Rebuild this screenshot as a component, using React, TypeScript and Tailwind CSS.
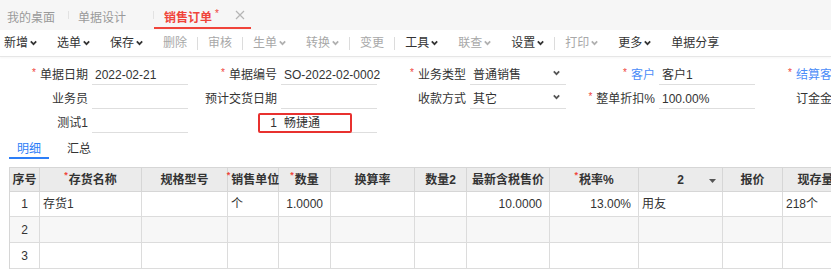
import React from "react";

const font = "font-['Liberation_Sans','Noto_Sans_CJK_SC',sans-serif]";

function Chevron({ className = "" }: { className?: string }) {
  return (
    <svg width="7" height="6" viewBox="0 0 7 6" className={className}>
      <path d="M0.8 1.4 L3.5 4.2 L6.2 1.4" fill="none" stroke="currentColor" strokeWidth="1.7" />
    </svg>
  );
}

type Tool = { t: string; c?: boolean; d?: boolean } | "|";

const tools: Tool[] = [
  { t: "新增", c: true },
  { t: "选单", c: true },
  { t: "保存", c: true },
  { t: "删除", d: true },
  "|",
  { t: "审核", d: true },
  "|",
  { t: "生单", c: true, d: true },
  { t: "转换", c: true, d: true },
  "|",
  { t: "变更", d: true },
  "|",
  { t: "工具", c: true },
  { t: "联查", c: true, d: true },
  { t: "设置", c: true },
  "|",
  { t: "打印", c: true, d: true },
  { t: "更多", c: true },
  { t: "单据分享" },
];

function Star() {
  return <span className="text-[#f0443a] text-[10px] leading-none mr-[4px] relative top-[-3px]">*</span>;
}

function Field({
  label,
  req,
  blue,
  value,
  select,
  noInput,
}: {
  label?: string;
  req?: boolean;
  blue?: boolean;
  value?: string;
  select?: boolean;
  noInput?: boolean;
}) {
  return (
    <div className="flex w-[189px] h-[24px] shrink-0">
      <div className={`w-[88px] text-right pt-[5px] whitespace-nowrap ${blue ? "text-[#4b8df8]" : "text-[#333]"}`}>
        {req && <Star />}
        {label}
      </div>
      {!noInput && (
        <div className="ml-[4px] w-[96px] border-b border-[#dedede] flex items-start pt-[5px] pl-[3px] pr-[6px] justify-between text-[#333]">
          <span className="whitespace-nowrap">{value}</span>
          {select && <Chevron className="text-[#555] mt-[4px]" />}
        </div>
      )}
    </div>
  );
}

const cols = [
  { h: "序号", w: 30 },
  { h: "存货名称", w: 102, r: true },
  { h: "规格型号", w: 86 },
  { h: "销售单位", w: 51, r: true },
  { h: "数量", w: 52, r: true },
  { h: "换算率", w: 84 },
  { h: "数量2", w: 52 },
  { h: "最新含税售价", w: 83 },
  { h: "税率%", w: 89, r: true },
  { h: "2", w: 84, dd: true },
  { h: "报价", w: 60 },
  { h: "现存量", w: 66 },
];

const row1: { v: string; a: "l" | "r" | "c" }[] = [
  { v: "1", a: "c" },
  { v: "存货1", a: "l" },
  { v: "", a: "l" },
  { v: "个", a: "l" },
  { v: "1.0000", a: "r" },
  { v: "", a: "l" },
  { v: "", a: "l" },
  { v: "10.0000", a: "r" },
  { v: "13.00%", a: "r" },
  { v: "用友", a: "l" },
  { v: "", a: "l" },
  { v: "218个", a: "l" },
];

export default function App() {
  return (
    <div className={`w-[831px] h-[270px] overflow-hidden bg-white text-[12px] ${font}`}>
      {/* tabs */}
      <div className="h-[30px] bg-[#f6f6f6] flex items-stretch text-[#9a9a9a]">
        <div className="pl-[7px] pr-[13px] pt-[9px]">我的桌面</div>
        <div className="w-px bg-[#e2e2e2] my-[11px]" />
        <div className="pl-[9px] pr-[27px] pt-[9px]">单据设计</div>
        <div className="w-px bg-[#e2e2e2] my-[11px]" />
        <div className="w-[97px] flex items-start pl-[10px] pt-[9px] border-b-2 border-[#f0443a] mb-[1px]">
          <span className="text-[#f0443a] font-bold">销售订单</span>
          <span className="text-[#f0443a] text-[10px] ml-[3px] leading-none">*</span>
          <span className="ml-auto mr-[6px] mt-[1px] text-[#b5b5b5]">
            <svg width="10" height="10" viewBox="0 0 10 10">
              <path d="M1 1 L9 9 M9 1 L1 9" stroke="currentColor" strokeWidth="1.2" />
            </svg>
          </span>
        </div>
      </div>

      {/* toolbar */}
      <div className="h-[27px] flex items-center border-b border-[#e6e6e6] shadow-[0_1px_2px_rgba(0,0,0,0.04)] pl-[4px]">
        {tools.map((it, i) =>
          it === "|" ? (
            <div key={i} className="w-px h-[13px] bg-[#dcdcdc]" />
          ) : (
            <div
              key={i}
              className={`flex items-center gap-[2px] ${i === 0 ? "pr-[10px]" : "px-[10px]"} ${
                it.d ? "text-[#a8a8a8]" : "text-[#333]"
              }`}
            >
              <span>{it.t}</span>
              {it.c && <Chevron className={it.d ? "text-[#b0b0b0]" : "text-[#333]"} />}
            </div>
          )
        )}
      </div>

      {/* form */}
      <div className="pt-[4px]">
        <div className="flex">
          <Field label="单据日期" req value="2022-02-21" />
          <Field label="单据编号" req value="SO-2022-02-0002" />
          <Field label="业务类型" req value="普通销售" select />
          <Field label="客户" req blue value="客户1" />
          <Field label="结算客户" req blue noInput />
        </div>
        <div className="flex">
          <Field label="业务员" />
          <Field label="预计交货日期" />
          <Field label="收款方式" value="其它" select />
          <Field label="整单折扣%" req value="100.00%" />
          <Field label="订金金额" noInput />
        </div>
        <div className="flex">
          <Field label="测试1" />
          <div className="relative">
            <Field label="1" value="畅捷通" />
            <div className="absolute left-[69px] top-[4px] w-[94px] h-[20px] border-2 border-[#e8312f] rounded-[2px]" />
          </div>
        </div>
      </div>

      {/* sub tabs */}
      <div className="flex pl-[9px] mt-[2px] h-[24px]">
        <div className="w-[40px] text-center pt-[5px] text-[#2d7ef7] border-b-2 border-[#2d7ef7]">明细</div>
        <div className="w-[40px] ml-[10px] text-center pt-[5px] text-[#333]">汇总</div>
      </div>

      {/* table */}
      <div className="ml-[9px] mt-[8px] w-[900px]">
        <div className="flex border-t border-l border-[#d6d6d6] bg-[#ebebeb] h-[25px]">
          {cols.map((c, i) => (
            <div
              key={i}
              style={{ width: c.w }}
              className="shrink-0 border-r border-b border-[#d6d6d6] flex items-center justify-center font-bold text-[#333] relative whitespace-nowrap"
            >
              {c.r && <span className="text-[#f0443a] text-[9px] leading-none relative top-[-4px] mr-[1px]">*</span>}
              {c.h}
              {c.dd && (
                <svg width="7" height="4" viewBox="0 0 7 4" className="absolute right-[6px] top-[11px]">
                  <path d="M0 0 L7 0 L3.5 4 Z" fill="#555" />
                </svg>
              )}
            </div>
          ))}
        </div>
        <div className="flex border-l border-[#d6d6d6] h-[25px] bg-white">
          {row1.map((c, i) => (
            <div
              key={i}
              style={{ width: cols[i].w }}
              className={`shrink-0 border-r border-b border-[#dcdcdc] flex items-center text-[#333] whitespace-nowrap ${
                c.a === "c" ? "justify-center" : c.a === "r" ? "justify-end pr-[7px]" : "pl-[3px]"
              }`}
            >
              {c.v}
            </div>
          ))}
        </div>
        {["2", "3"].map((n, r) => (
          <div key={n} className={`flex border-l border-[#d6d6d6] h-[26px] ${r === 0 ? "bg-[#f7f7f7]" : "bg-white"}`}>
            {cols.map((c, i) => (
              <div
                key={i}
                style={{ width: c.w }}
                className="shrink-0 border-r border-b border-[#dcdcdc] flex items-center justify-center text-[#333]"
              >
                {i === 0 ? n : ""}
              </div>
            ))}
          </div>
        ))}
      </div>
    </div>
  );
}
